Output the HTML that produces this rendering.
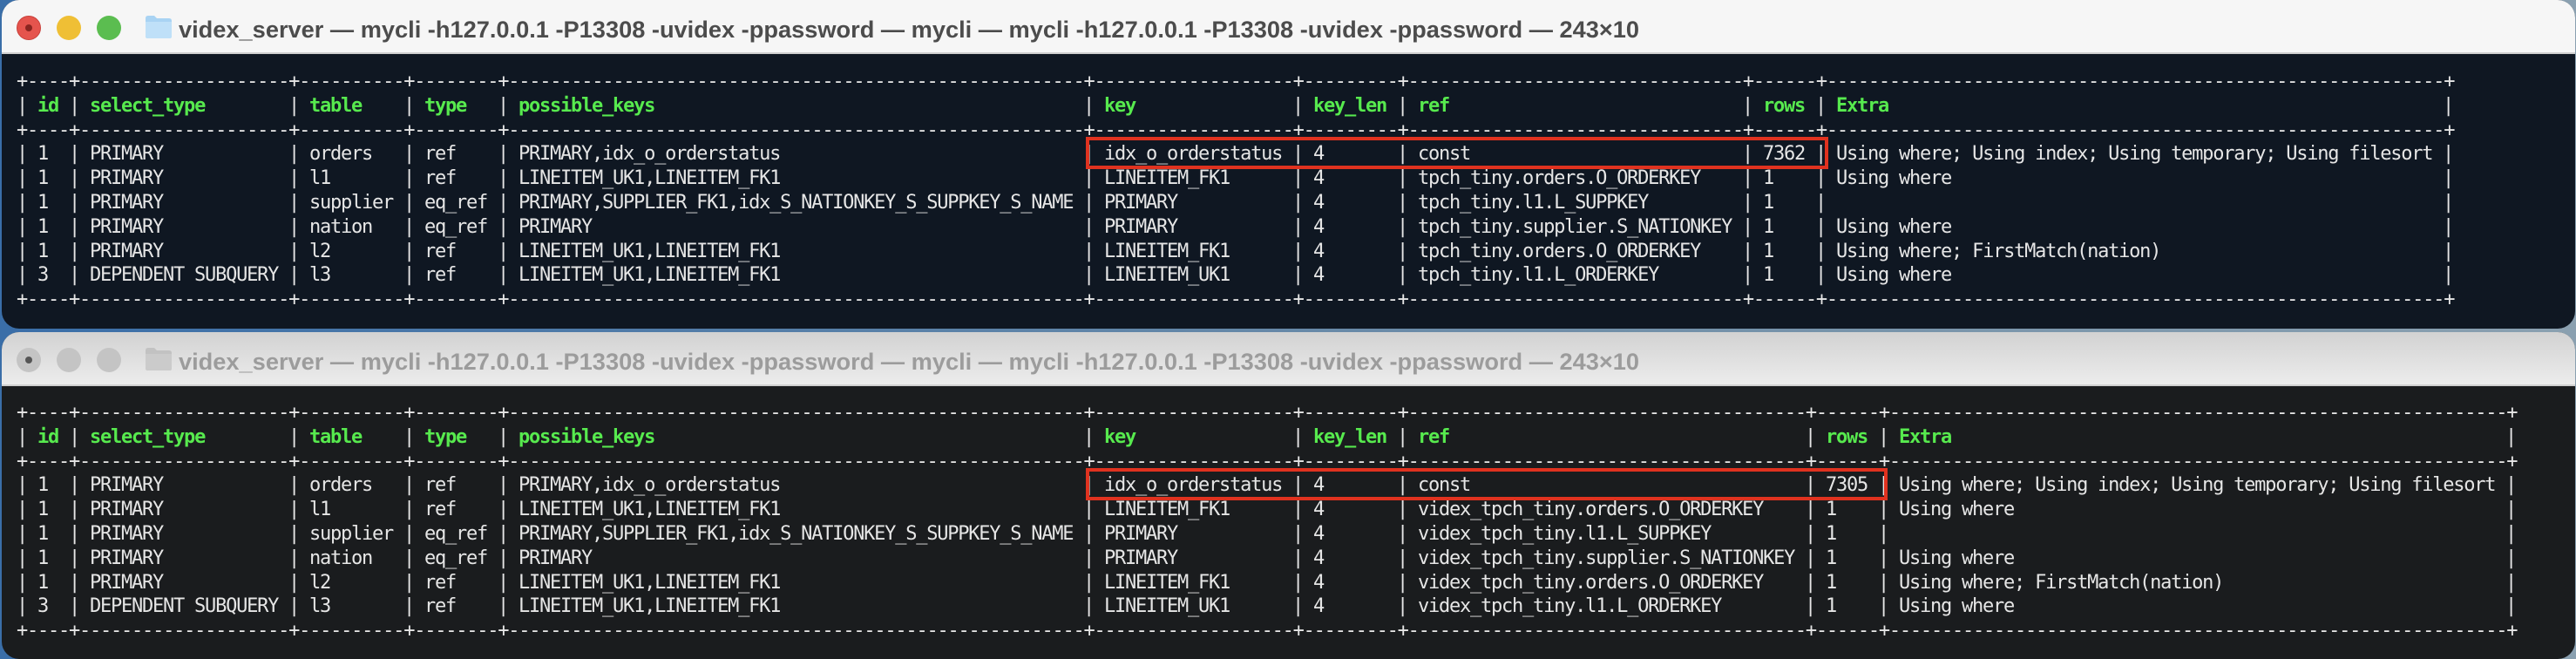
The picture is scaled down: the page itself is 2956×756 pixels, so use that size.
<!DOCTYPE html>
<html><head><meta charset="utf-8"><style>
html,body{margin:0;padding:0}
body{width:2956px;height:756px;position:relative;overflow:hidden;background:linear-gradient(90deg,#3a6ea8,#6f8ea8 60%,#8aa0b0)}
.win{position:absolute;left:2px;width:2953px;border-radius:20px;overflow:hidden}
.tb{position:absolute;left:0;top:0;width:100%;height:62px;border-bottom:2px solid #cfcfcf;box-sizing:border-box}
.term{position:absolute;left:0;top:62px;width:100%;bottom:0}
.dot{position:absolute;top:18px;width:28px;height:28px;border-radius:50%}
.t{position:absolute;left:17px;font-family:"DejaVu Sans Mono","Liberation Mono",monospace;font-size:22px;letter-spacing:-1.24px;color:#e6e6e6}
.r{height:27.8px;line-height:28px;white-space:pre;display:flex}
.r span{display:inline-block;white-space:pre;vertical-align:top}
.p{width:12px}
.g{color:#57ea4e;font-weight:bold}
.box{position:absolute;border:4px solid #e0321f;box-sizing:border-box}
</style></head><body>

<!-- Window 1 -->
<div class="win" style="top:0;height:377px;background:#0f1722">
 <div class="tb" style="background:#f6f6f6">
  <div class="dot" style="left:17px;background:#e5544d;border:1px solid #c9403a;box-sizing:border-box"><div style="position:absolute;left:9px;top:9px;width:8px;height:8px;border-radius:50%;background:#8a2520"></div></div>
  <div class="dot" style="left:63px;background:#efbf35"></div>
  <div class="dot" style="left:109px;background:#5bbd50"></div>
  <svg style="position:absolute;left:164px;top:17px" width="32" height="28"><path d="M1 4 Q1 1 4 1 H11 L14 4 H28 Q31 4 31 7 V25 Q31 27 28 27 H4 Q1 27 1 25 Z" fill="#a9d3f3"/><path d="M1 8 H31 V25 Q31 27 28 27 H4 Q1 27 1 25 Z" fill="#bfe0f8"/></svg>
  <svg style="position:absolute;left:203px;top:8px" width="1700" height="48"><text x="0" y="35" font-family="Liberation Sans,sans-serif" font-weight="bold" font-size="27" fill="#4c4c4c" textLength="1676" lengthAdjust="spacingAndGlyphs">videx_server — mycli -h127.0.0.1 -P13308 -uvidex -ppassword — mycli — mycli -h127.0.0.1 -P13308 -uvidex -ppassword — 243×10</text></svg>
 </div>
 <div class="term"></div>
 <div class="t" style="top:80px">
<div class="r">+----+--------------------+----------+--------+-------------------------------------------------------+-------------------+---------+--------------------------------+------+-----------------------------------------------------------+</div>
<div class="r"><span class="p">|</span><span style="width:48px"> <b class="g">id</b></span><span class="p">|</span><span style="width:240px"> <b class="g">select_type</b></span><span class="p">|</span><span style="width:120px"> <b class="g">table</b></span><span class="p">|</span><span style="width:96px"> <b class="g">type</b></span><span class="p">|</span><span style="width:660px"> <b class="g">possible_keys</b></span><span class="p">|</span><span style="width:228px"> <b class="g">key</b></span><span class="p">|</span><span style="width:108px"> <b class="g">key_len</b></span><span class="p">|</span><span style="width:384px"> <b class="g">ref</b></span><span class="p">|</span><span style="width:72px"> <b class="g">rows</b></span><span class="p">|</span><span style="width:708px"> <b class="g">Extra</b></span><span class="p">|</span></div>
<div class="r">+----+--------------------+----------+--------+-------------------------------------------------------+-------------------+---------+--------------------------------+------+-----------------------------------------------------------+</div>
<div class="r"><span class="p">|</span><span style="width:48px"> 1</span><span class="p">|</span><span style="width:240px"> PRIMARY</span><span class="p">|</span><span style="width:120px"> orders</span><span class="p">|</span><span style="width:96px"> ref</span><span class="p">|</span><span style="width:660px"> PRIMARY,idx_o_orderstatus</span><span class="p">|</span><span style="width:228px"> idx_o_orderstatus</span><span class="p">|</span><span style="width:108px"> 4</span><span class="p">|</span><span style="width:384px"> const</span><span class="p">|</span><span style="width:72px"> 7362</span><span class="p">|</span><span style="width:708px"> Using where; Using index; Using temporary; Using filesort</span><span class="p">|</span></div>
<div class="r"><span class="p">|</span><span style="width:48px"> 1</span><span class="p">|</span><span style="width:240px"> PRIMARY</span><span class="p">|</span><span style="width:120px"> l1</span><span class="p">|</span><span style="width:96px"> ref</span><span class="p">|</span><span style="width:660px"> LINEITEM_UK1,LINEITEM_FK1</span><span class="p">|</span><span style="width:228px"> LINEITEM_FK1</span><span class="p">|</span><span style="width:108px"> 4</span><span class="p">|</span><span style="width:384px"> tpch_tiny.orders.O_ORDERKEY</span><span class="p">|</span><span style="width:72px"> 1</span><span class="p">|</span><span style="width:708px"> Using where</span><span class="p">|</span></div>
<div class="r"><span class="p">|</span><span style="width:48px"> 1</span><span class="p">|</span><span style="width:240px"> PRIMARY</span><span class="p">|</span><span style="width:120px"> supplier</span><span class="p">|</span><span style="width:96px"> eq_ref</span><span class="p">|</span><span style="width:660px"> PRIMARY,SUPPLIER_FK1,idx_S_NATIONKEY_S_SUPPKEY_S_NAME</span><span class="p">|</span><span style="width:228px"> PRIMARY</span><span class="p">|</span><span style="width:108px"> 4</span><span class="p">|</span><span style="width:384px"> tpch_tiny.l1.L_SUPPKEY</span><span class="p">|</span><span style="width:72px"> 1</span><span class="p">|</span><span style="width:708px"> </span><span class="p">|</span></div>
<div class="r"><span class="p">|</span><span style="width:48px"> 1</span><span class="p">|</span><span style="width:240px"> PRIMARY</span><span class="p">|</span><span style="width:120px"> nation</span><span class="p">|</span><span style="width:96px"> eq_ref</span><span class="p">|</span><span style="width:660px"> PRIMARY</span><span class="p">|</span><span style="width:228px"> PRIMARY</span><span class="p">|</span><span style="width:108px"> 4</span><span class="p">|</span><span style="width:384px"> tpch_tiny.supplier.S_NATIONKEY</span><span class="p">|</span><span style="width:72px"> 1</span><span class="p">|</span><span style="width:708px"> Using where</span><span class="p">|</span></div>
<div class="r"><span class="p">|</span><span style="width:48px"> 1</span><span class="p">|</span><span style="width:240px"> PRIMARY</span><span class="p">|</span><span style="width:120px"> l2</span><span class="p">|</span><span style="width:96px"> ref</span><span class="p">|</span><span style="width:660px"> LINEITEM_UK1,LINEITEM_FK1</span><span class="p">|</span><span style="width:228px"> LINEITEM_FK1</span><span class="p">|</span><span style="width:108px"> 4</span><span class="p">|</span><span style="width:384px"> tpch_tiny.orders.O_ORDERKEY</span><span class="p">|</span><span style="width:72px"> 1</span><span class="p">|</span><span style="width:708px"> Using where; FirstMatch(nation)</span><span class="p">|</span></div>
<div class="r"><span class="p">|</span><span style="width:48px"> 3</span><span class="p">|</span><span style="width:240px"> DEPENDENT SUBQUERY</span><span class="p">|</span><span style="width:120px"> l3</span><span class="p">|</span><span style="width:96px"> ref</span><span class="p">|</span><span style="width:660px"> LINEITEM_UK1,LINEITEM_FK1</span><span class="p">|</span><span style="width:228px"> LINEITEM_UK1</span><span class="p">|</span><span style="width:108px"> 4</span><span class="p">|</span><span style="width:384px"> tpch_tiny.l1.L_ORDERKEY</span><span class="p">|</span><span style="width:72px"> 1</span><span class="p">|</span><span style="width:708px"> Using where</span><span class="p">|</span></div>
<div class="r">+----+--------------------+----------+--------+-------------------------------------------------------+-------------------+---------+--------------------------------+------+-----------------------------------------------------------+</div>
 </div>
 <div class="box" style="left:1244px;top:157px;width:852px;height:37px"></div>
</div>

<!-- Window 2 -->
<div class="win" style="top:381px;height:375px;background:#1a1c1e">
 <div class="tb" style="background:linear-gradient(180deg,#d2d2d2,#ececec)">
  <div class="dot" style="left:17px;background:#c4c4c4"><div style="position:absolute;left:10px;top:10px;width:8px;height:8px;border-radius:50%;background:#555"></div></div>
  <div class="dot" style="left:63px;background:#c4c4c4"></div>
  <div class="dot" style="left:109px;background:#c4c4c4"></div>
  <svg style="position:absolute;left:164px;top:17px" width="32" height="28"><path d="M1 4 Q1 1 4 1 H11 L14 4 H28 Q31 4 31 7 V25 Q31 27 28 27 H4 Q1 27 1 25 Z" fill="#c2c2c2"/><path d="M1 8 H31 V25 Q31 27 28 27 H4 Q1 27 1 25 Z" fill="#cbcbcb"/></svg>
  <svg style="position:absolute;left:203px;top:8px" width="1700" height="48"><text x="0" y="35" font-family="Liberation Sans,sans-serif" font-weight="bold" font-size="27" fill="#9c9c9c" textLength="1676" lengthAdjust="spacingAndGlyphs">videx_server — mycli -h127.0.0.1 -P13308 -uvidex -ppassword — mycli — mycli -h127.0.0.1 -P13308 -uvidex -ppassword — 243×10</text></svg>
 </div>
 <div class="t" style="top:79px">
<div class="r">+----+--------------------+----------+--------+-------------------------------------------------------+-------------------+---------+--------------------------------------+------+-----------------------------------------------------------+</div>
<div class="r"><span class="p">|</span><span style="width:48px"> <b class="g">id</b></span><span class="p">|</span><span style="width:240px"> <b class="g">select_type</b></span><span class="p">|</span><span style="width:120px"> <b class="g">table</b></span><span class="p">|</span><span style="width:96px"> <b class="g">type</b></span><span class="p">|</span><span style="width:660px"> <b class="g">possible_keys</b></span><span class="p">|</span><span style="width:228px"> <b class="g">key</b></span><span class="p">|</span><span style="width:108px"> <b class="g">key_len</b></span><span class="p">|</span><span style="width:456px"> <b class="g">ref</b></span><span class="p">|</span><span style="width:72px"> <b class="g">rows</b></span><span class="p">|</span><span style="width:708px"> <b class="g">Extra</b></span><span class="p">|</span></div>
<div class="r">+----+--------------------+----------+--------+-------------------------------------------------------+-------------------+---------+--------------------------------------+------+-----------------------------------------------------------+</div>
<div class="r"><span class="p">|</span><span style="width:48px"> 1</span><span class="p">|</span><span style="width:240px"> PRIMARY</span><span class="p">|</span><span style="width:120px"> orders</span><span class="p">|</span><span style="width:96px"> ref</span><span class="p">|</span><span style="width:660px"> PRIMARY,idx_o_orderstatus</span><span class="p">|</span><span style="width:228px"> idx_o_orderstatus</span><span class="p">|</span><span style="width:108px"> 4</span><span class="p">|</span><span style="width:456px"> const</span><span class="p">|</span><span style="width:72px"> 7305</span><span class="p">|</span><span style="width:708px"> Using where; Using index; Using temporary; Using filesort</span><span class="p">|</span></div>
<div class="r"><span class="p">|</span><span style="width:48px"> 1</span><span class="p">|</span><span style="width:240px"> PRIMARY</span><span class="p">|</span><span style="width:120px"> l1</span><span class="p">|</span><span style="width:96px"> ref</span><span class="p">|</span><span style="width:660px"> LINEITEM_UK1,LINEITEM_FK1</span><span class="p">|</span><span style="width:228px"> LINEITEM_FK1</span><span class="p">|</span><span style="width:108px"> 4</span><span class="p">|</span><span style="width:456px"> videx_tpch_tiny.orders.O_ORDERKEY</span><span class="p">|</span><span style="width:72px"> 1</span><span class="p">|</span><span style="width:708px"> Using where</span><span class="p">|</span></div>
<div class="r"><span class="p">|</span><span style="width:48px"> 1</span><span class="p">|</span><span style="width:240px"> PRIMARY</span><span class="p">|</span><span style="width:120px"> supplier</span><span class="p">|</span><span style="width:96px"> eq_ref</span><span class="p">|</span><span style="width:660px"> PRIMARY,SUPPLIER_FK1,idx_S_NATIONKEY_S_SUPPKEY_S_NAME</span><span class="p">|</span><span style="width:228px"> PRIMARY</span><span class="p">|</span><span style="width:108px"> 4</span><span class="p">|</span><span style="width:456px"> videx_tpch_tiny.l1.L_SUPPKEY</span><span class="p">|</span><span style="width:72px"> 1</span><span class="p">|</span><span style="width:708px"> </span><span class="p">|</span></div>
<div class="r"><span class="p">|</span><span style="width:48px"> 1</span><span class="p">|</span><span style="width:240px"> PRIMARY</span><span class="p">|</span><span style="width:120px"> nation</span><span class="p">|</span><span style="width:96px"> eq_ref</span><span class="p">|</span><span style="width:660px"> PRIMARY</span><span class="p">|</span><span style="width:228px"> PRIMARY</span><span class="p">|</span><span style="width:108px"> 4</span><span class="p">|</span><span style="width:456px"> videx_tpch_tiny.supplier.S_NATIONKEY</span><span class="p">|</span><span style="width:72px"> 1</span><span class="p">|</span><span style="width:708px"> Using where</span><span class="p">|</span></div>
<div class="r"><span class="p">|</span><span style="width:48px"> 1</span><span class="p">|</span><span style="width:240px"> PRIMARY</span><span class="p">|</span><span style="width:120px"> l2</span><span class="p">|</span><span style="width:96px"> ref</span><span class="p">|</span><span style="width:660px"> LINEITEM_UK1,LINEITEM_FK1</span><span class="p">|</span><span style="width:228px"> LINEITEM_FK1</span><span class="p">|</span><span style="width:108px"> 4</span><span class="p">|</span><span style="width:456px"> videx_tpch_tiny.orders.O_ORDERKEY</span><span class="p">|</span><span style="width:72px"> 1</span><span class="p">|</span><span style="width:708px"> Using where; FirstMatch(nation)</span><span class="p">|</span></div>
<div class="r"><span class="p">|</span><span style="width:48px"> 3</span><span class="p">|</span><span style="width:240px"> DEPENDENT SUBQUERY</span><span class="p">|</span><span style="width:120px"> l3</span><span class="p">|</span><span style="width:96px"> ref</span><span class="p">|</span><span style="width:660px"> LINEITEM_UK1,LINEITEM_FK1</span><span class="p">|</span><span style="width:228px"> LINEITEM_UK1</span><span class="p">|</span><span style="width:108px"> 4</span><span class="p">|</span><span style="width:456px"> videx_tpch_tiny.l1.L_ORDERKEY</span><span class="p">|</span><span style="width:72px"> 1</span><span class="p">|</span><span style="width:708px"> Using where</span><span class="p">|</span></div>
<div class="r">+----+--------------------+----------+--------+-------------------------------------------------------+-------------------+---------+--------------------------------------+------+-----------------------------------------------------------+</div>
 </div>
 <div class="box" style="left:1244px;top:156px;width:920px;height:37px"></div>
</div>
</body></html>
